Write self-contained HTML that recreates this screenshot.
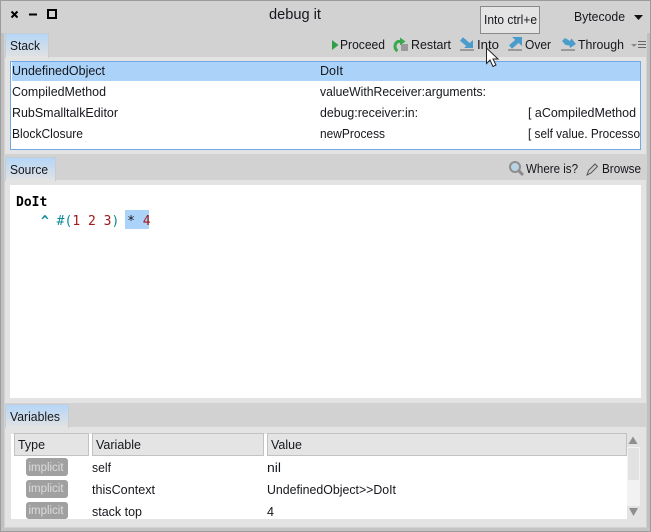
<!DOCTYPE html>
<html><head><meta charset="utf-8"><style>
html,body{margin:0;padding:0;background:#d2d2d2}
svg{display:block}
text{font-family:"Liberation Sans",sans-serif;font-size:13px;fill:#15171c}
.m{font-family:"DejaVu Sans Mono",monospace;font-size:13px}
</style></head><body>
<svg width="651" height="532" viewBox="0 0 651 532" xmlns="http://www.w3.org/2000/svg">
<defs><linearGradient id="t" x1="0" y1="0" x2="0" y2="1"><stop offset="0" stop-color="#b4d6f8"/><stop offset="1" stop-color="#e2e2e2"/></linearGradient></defs>
<rect width="651" height="532" fill="#d2d2d2"/>
<rect x="0.5" y="0.5" width="650" height="531" fill="none" stroke="#9c9c9c"/>
<rect x="1" y="528" width="649" height="3" fill="#c4c4c4"/>
<rect x="1" y="33" width="3" height="495" fill="#c0c0c0"/>
<rect x="647" y="33" width="3" height="495" fill="#c0c0c0"/>
<!-- title -->
<path d="M11.500 11.500l6 6m0-6l-6 6" stroke="#000" stroke-width="2" fill="none"/>
<rect x="29" y="13.500" width="8" height="2" fill="#000"/>
<rect x="48" y="10" width="8" height="8" fill="none" stroke="#000" stroke-width="2"/>
<text x="269" y="19" style="font-size:15px" textLength="52" lengthAdjust="spacingAndGlyphs">debug it</text>
<text x="574" y="21" textLength="51" lengthAdjust="spacingAndGlyphs">Bytecode</text>
<path d="M634 15h9l-4.500 5z" fill="#111"/>
<!-- tooltip -->
<rect x="480.500" y="6.500" width="59" height="27" fill="#e4e4e4" stroke="#8a8a8a"/>
<text x="484" y="24" style="font-size:12.500px" textLength="53" lengthAdjust="spacingAndGlyphs">Into ctrl+e</text>
<!-- stack -->
<rect x="5" y="57" width="641" height="97" fill="#e3e3e3"/>
<rect x="5.500" y="33.500" width="43" height="24" fill="url(#t)" stroke="#c6ccd4"/>
<rect x="6" y="56" width="42" height="2" fill="#e3e3e3"/>
<text x="10" y="50" textLength="30" lengthAdjust="spacingAndGlyphs">Stack</text>
<path d="M332 40l6.500 5-6.500 5z" fill="#2f9e45"/>
<text x="340" y="49" textLength="45" lengthAdjust="spacingAndGlyphs">Proceed</text>
<path d="M397.500 51a5.500 5.500 0 0 1 .5-9.500h3" fill="none" stroke="#3aa84f" stroke-width="3"/>
<path d="M400 37.500l5.500 4-5.500 4z" fill="#3aa84f"/>
<rect x="401" y="44" width="7" height="7" fill="#9a9a9a"/>
<text x="411" y="49" textLength="40" lengthAdjust="spacingAndGlyphs">Restart</text>
<path d="M461.500 39l7 6" stroke="#4a9ccc" stroke-width="4.500" fill="none"/>
<path d="M473 40v8h-9z" fill="#4a9ccc"/>
<rect x="460" y="49" width="14" height="2" fill="#9a9a9a"/>
<text x="477" y="49" textLength="22" lengthAdjust="spacingAndGlyphs">Into</text>
<path d="M518.500 40l-8 7" stroke="#4a9ccc" stroke-width="4.500" fill="none"/>
<path d="M512 37h10v9z" fill="#4a9ccc"/>
<rect x="508" y="49" width="14" height="2" fill="#9a9a9a"/>
<text x="525" y="49" textLength="26" lengthAdjust="spacingAndGlyphs">Over</text>
<path d="M562 41l3-3 5 3 1.500-2.500 4.500 5.500-6 4-.5-2.500-4-.5z" fill="#4a9ccc"/>
<rect x="561" y="49" width="14" height="2" fill="#9a9a9a"/>
<text x="578" y="49" textLength="46" lengthAdjust="spacingAndGlyphs">Through</text>
<path d="M631 44h6l-3 3z" fill="#8a8a8a"/>
<path d="M638 41.500h8M638 44.500h8M638 47.500h8" stroke="#666" stroke-width="1"/>
<rect x="10.500" y="61.500" width="630" height="88" fill="#fff" stroke="#6fa9e3"/>
<rect x="12" y="62" width="628" height="19" fill="#abd2f8"/>
<text x="12" y="75" textLength="93" lengthAdjust="spacingAndGlyphs">UndefinedObject</text>
<text x="320" y="75" textLength="23" lengthAdjust="spacingAndGlyphs">DoIt</text>
<text x="12" y="96" textLength="94" lengthAdjust="spacingAndGlyphs">CompiledMethod</text>
<text x="320" y="96" textLength="166" lengthAdjust="spacingAndGlyphs">valueWithReceiver:arguments:</text>
<text x="12" y="117" textLength="106" lengthAdjust="spacingAndGlyphs">RubSmalltalkEditor</text>
<text x="320" y="117" textLength="98" lengthAdjust="spacingAndGlyphs">debug:receiver:in:</text>
<text x="528" y="117" textLength="108" lengthAdjust="spacingAndGlyphs">[ aCompiledMethod</text>
<text x="12" y="138" textLength="71" lengthAdjust="spacingAndGlyphs">BlockClosure</text>
<text x="320" y="138" textLength="65" lengthAdjust="spacingAndGlyphs">newProcess</text>
<text x="528" y="138" textLength="112" lengthAdjust="spacingAndGlyphs">[ self value. Processo</text>
<!-- source -->
<rect x="5" y="154" width="641" height="3" fill="#d2d2d2"/>
<rect x="5" y="180" width="641" height="223" fill="#e3e3e3"/>
<rect x="5.500" y="157.500" width="50" height="23" fill="url(#t)" stroke="#c6ccd4"/>
<rect x="6" y="179" width="49" height="2" fill="#e3e3e3"/>
<text x="10" y="174" textLength="38" lengthAdjust="spacingAndGlyphs">Source</text>
<circle cx="515" cy="167" r="5" fill="#b8d4e4" stroke="#8e8e8e" stroke-width="2"/>
<path d="M519 171l4 4" stroke="#8a8a8a" stroke-width="3"/>
<text x="526" y="173" textLength="52" lengthAdjust="spacingAndGlyphs">Where is?</text>
<path d="M587 175l1.500-4.500 6.500-6.500 2.500 2.500-6.500 6.500z" fill="#ccc" stroke="#555"/>
<text x="602" y="173" textLength="39" lengthAdjust="spacingAndGlyphs">Browse</text>
<rect x="10" y="185" width="631" height="213" fill="#fff"/>
<rect x="125" y="210" width="24" height="19" fill="#abd2f8"/>
<text class="m" x="16" y="206" font-weight="bold" style="fill:#000">DoIt</text>
<text class="m" x="41" y="225" xml:space="preserve"><tspan style="fill:#0b8a99;font-weight:bold">^</tspan> <tspan style="fill:#0b8a99">#(</tspan><tspan style="fill:#a01818">1</tspan> <tspan style="fill:#a01818">2</tspan> <tspan style="fill:#a01818">3</tspan><tspan style="fill:#0b8a99">)</tspan> <tspan style="fill:#111">*</tspan> <tspan style="fill:#a01818">4</tspan></text>
<!-- variables -->
<rect x="5" y="427" width="641" height="100" fill="#e3e3e3"/>
<rect x="5.500" y="404.500" width="63" height="23" fill="url(#t)" stroke="#c6ccd4"/>
<rect x="6" y="426" width="62" height="2" fill="#e3e3e3"/>
<text x="10" y="421" textLength="50" lengthAdjust="spacingAndGlyphs">Variables</text>
<rect x="11" y="434" width="616" height="85" fill="#fff"/>
<rect x="14.500" y="433.500" width="74" height="22" fill="#e4e4e4" stroke="#c2c2c2"/>
<rect x="92.500" y="433.500" width="171" height="22" fill="#e4e4e4" stroke="#c2c2c2"/>
<rect x="267.500" y="433.500" width="359" height="22" fill="#e4e4e4" stroke="#c2c2c2"/>
<text x="18" y="449" textLength="27" lengthAdjust="spacingAndGlyphs">Type</text>
<text x="96" y="449" textLength="45" lengthAdjust="spacingAndGlyphs">Variable</text>
<text x="271" y="449" textLength="31" lengthAdjust="spacingAndGlyphs">Value</text>
<rect x="26" y="458" width="42" height="18" rx="3" fill="#a0a0a0"/>
<rect x="26" y="480" width="42" height="18" rx="3" fill="#a0a0a0"/>
<rect x="26" y="502" width="42" height="17" rx="3" fill="#a0a0a0"/>
<text x="28.500" y="471" style="font-size:11.500px;fill:#dcdcdc" textLength="35" lengthAdjust="spacingAndGlyphs">implicit</text>
<text x="28.500" y="492" style="font-size:11.500px;fill:#dcdcdc" textLength="35" lengthAdjust="spacingAndGlyphs">implicit</text>
<text x="28.500" y="514" style="font-size:11.500px;fill:#dcdcdc" textLength="35" lengthAdjust="spacingAndGlyphs">implicit</text>
<text x="92" y="472" textLength="19" lengthAdjust="spacingAndGlyphs">self</text>
<text x="267" y="472" textLength="14" lengthAdjust="spacingAndGlyphs">nil</text>
<text x="92" y="494" textLength="63" lengthAdjust="spacingAndGlyphs">thisContext</text>
<text x="267" y="494" textLength="129" lengthAdjust="spacingAndGlyphs">UndefinedObject&gt;&gt;DoIt</text>
<text x="92" y="516" textLength="50" lengthAdjust="spacingAndGlyphs">stack top</text>
<text x="267" y="516" textLength="7" lengthAdjust="spacingAndGlyphs">4</text>
<!-- scrollbar -->
<path d="M628.500 444l4.500-7.500 4.500 7.500z" fill="#8e8e8e"/>
<rect x="627" y="447" width="13" height="59" fill="#f2f2f2"/>
<rect x="628" y="448" width="11" height="32" fill="#e2e2e2"/>
<path d="M629 508h9l-4.500 8z" fill="#8e8e8e"/>
<!-- cursor -->
<path d="M486.500 48v15.500l3.500-3.500 3 6.500 3-1.500-3-6h5z" fill="#fff" stroke="#222" stroke-width="1"/>
</svg>
</body></html>
